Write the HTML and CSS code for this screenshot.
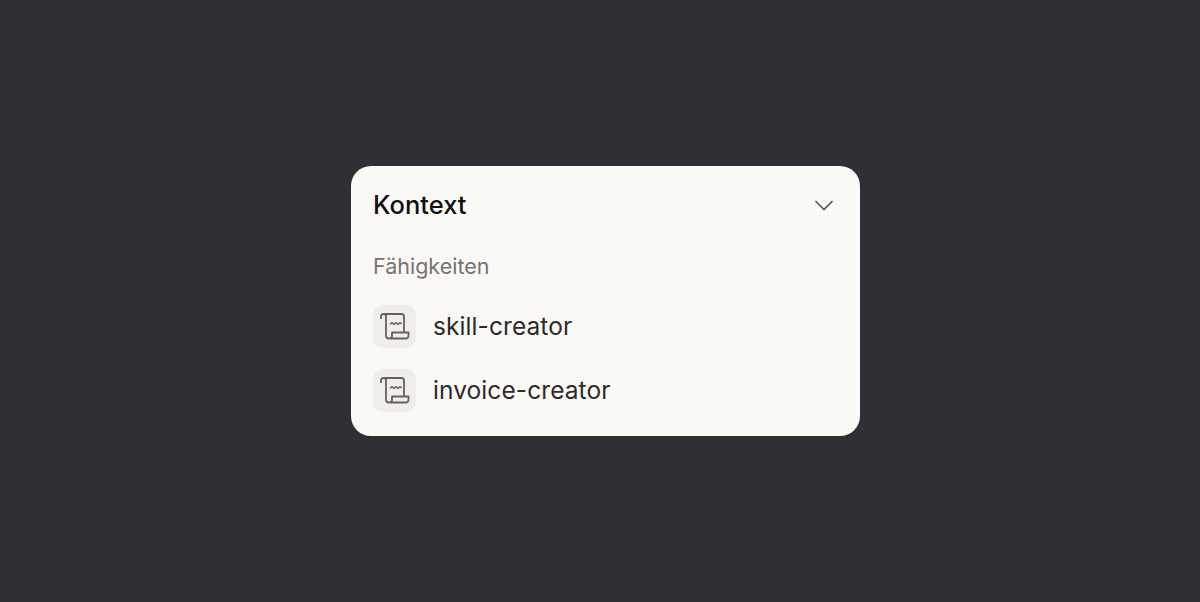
FILE: index.html
```html
<!DOCTYPE html>
<html lang="de">
<head>
    <meta charset="UTF-8">
    <meta name="viewport" content="width=device-width, initial-scale=1.0">
    <title>Kontext</title>
    <link rel="stylesheet" href="styles.css">
</head>
<body>
    <div class="card">
        <div class="card-header">
            <h2 class="card-title">Kontext</h2>
            <svg class="chevron" width="20" height="12" viewBox="0 0 20 12" aria-hidden="true">
                <path d="M1.5 2 L10 10.5 L18.5 2"/>
            </svg>
        </div>
        <div class="section-label">Fähigkeiten</div>
        <ul class="skill-list">
            <li class="skill">
                <span class="skill-icon">
                    <svg width="30" height="28" viewBox="0 0 30 28" aria-hidden="true">
                        <path d="M1 6 V3.5 A2.5 2.5 0 0 1 3.5 1 H21.5 A2.5 2.5 0 0 1 24 3.5 V19.5"/>
                        <path d="M3.5 1 A2.5 2.5 0 0 1 6 3.5 V22.5 A3 3 0 0 0 9 25.5 H26 A2.5 2.5 0 0 0 28.5 23 V19.5 H12 V23 A2.5 2.5 0 0 1 9.5 25.5"/>
                        <path class="squiggle" d="M10 11.5 L12 9.5 L14 11.5 L16 9.5 L18 11.5 L20 9.5 L21.5 11"/>
                    </svg>
                </span>
                <span class="skill-name">skill-creator</span>
            </li>
            <li class="skill">
                <span class="skill-icon">
                    <svg width="30" height="28" viewBox="0 0 30 28" aria-hidden="true">
                        <path d="M1 6 V3.5 A2.5 2.5 0 0 1 3.5 1 H21.5 A2.5 2.5 0 0 1 24 3.5 V19.5"/>
                        <path d="M3.5 1 A2.5 2.5 0 0 1 6 3.5 V22.5 A3 3 0 0 0 9 25.5 H26 A2.5 2.5 0 0 0 28.5 23 V19.5 H12 V23 A2.5 2.5 0 0 1 9.5 25.5"/>
                        <path class="squiggle" d="M10 11.5 L12 9.5 L14 11.5 L16 9.5 L18 11.5 L20 9.5 L21.5 11"/>
                    </svg>
                </span>
                <span class="skill-name">invoice-creator</span>
            </li>
        </ul>
    </div>
</body>
</html>
```

FILE: styles.css
```css
body {
    margin: 0;
    height: 602px;
    overflow: hidden;
    background-color: #2f3034;
    font-family: "Inter", "Liberation Sans", sans-serif;
    display: flex;
    justify-content: center;
    align-items: center;
    padding-left: 11px;
    box-sizing: border-box;
}

.card {
    width: 509px;
    height: 270px;
    box-sizing: border-box;
    padding: 22px 26px 0 22px;
    background-color: #fbf9f6;
    border-radius: 20px;
}

.card-header {
    display: flex;
    justify-content: space-between;
    align-items: center;
    height: 34px;
}

.card-title {
    margin: 0 0 2px;
    font-size: 25.5px;
    font-weight: 500;
    color: #111;
}

.chevron path {
    fill: none;
    stroke: #55534e;
    stroke-width: 1.6;
}

.section-label {
    margin-top: 32px;
    font-size: 21.5px;
    line-height: 24px;
    color: #76746e;
}

.skill-list {
    list-style: none;
    margin: 27px 0 0;
    padding: 0;
    display: flex;
    flex-direction: column;
    gap: 21px;
}

.skill {
    display: flex;
    align-items: center;
    gap: 17px;
}

.skill-icon {
    width: 43px;
    height: 43px;
    border-radius: 10px;
    background-color: #f0eee8;
    display: flex;
    align-items: center;
    justify-content: center;
}

.skill-icon path {
    fill: none;
    stroke: #64615a;
    stroke-width: 1.8;
    stroke-linejoin: round;
}

.skill-icon .squiggle {
    stroke-width: 1.4;
}

.skill-name {
    padding-bottom: 2px;
    font-size: 24.5px;
    letter-spacing: 0.08px;
    color: #2b2b2a;
}
```
